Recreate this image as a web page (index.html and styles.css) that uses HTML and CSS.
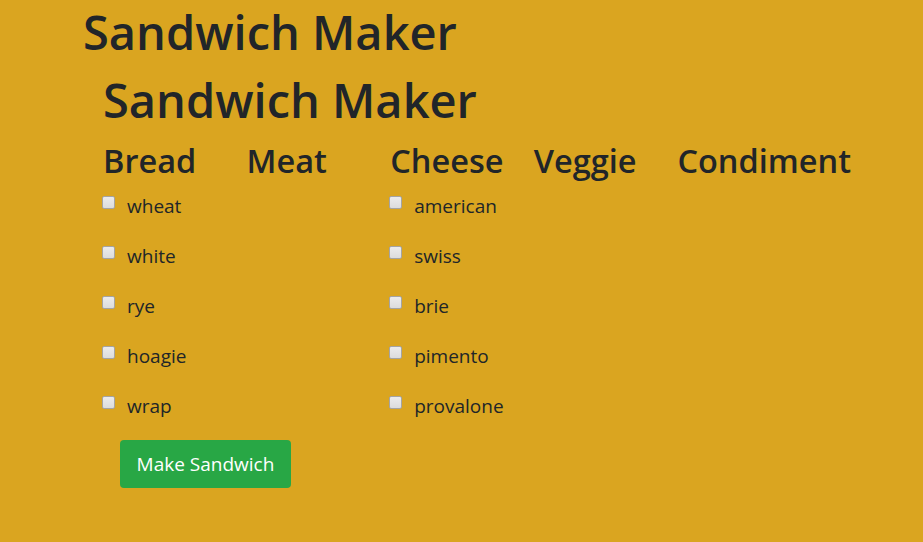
FILE: index.html
```html
<!DOCTYPE html>
<html lang="en">
<head>
<meta charset="utf-8">
<title>Sandwich Maker</title>
<link rel="stylesheet" href="styles.css">
</head>
<body>
<h1 class="page-title">Sandwich Maker</h1>
<main class="maker">
  <h1 class="maker-title">Sandwich Maker</h1>
  <div class="columns">
    <section class="col">
      <h2 class="col-title">Bread</h2>
      <label class="item"><input type="checkbox" class="check"><span>wheat</span></label>
      <label class="item"><input type="checkbox" class="check"><span>white</span></label>
      <label class="item"><input type="checkbox" class="check"><span>rye</span></label>
      <label class="item"><input type="checkbox" class="check"><span>hoagie</span></label>
      <label class="item"><input type="checkbox" class="check"><span>wrap</span></label>
    </section>
    <section class="col">
      <h2 class="col-title">Meat</h2>
    </section>
    <section class="col">
      <h2 class="col-title">Cheese</h2>
      <label class="item"><input type="checkbox" class="check"><span>american</span></label>
      <label class="item"><input type="checkbox" class="check"><span>swiss</span></label>
      <label class="item"><input type="checkbox" class="check"><span>brie</span></label>
      <label class="item"><input type="checkbox" class="check"><span>pimento</span></label>
      <label class="item"><input type="checkbox" class="check"><span>provalone</span></label>
    </section>
    <section class="col">
      <h2 class="col-title">Veggie</h2>
    </section>
    <section class="col">
      <h2 class="col-title">Condiment</h2>
    </section>
  </div>
  <button type="button" class="btn-make">Make Sandwich</button>
</main>
</body>
</html>
```
FILE: styles.css
```css
html, body {
  margin: 0;
  padding: 0;
}
body {
  background: #daa520;
  color: #212529;
  font-family: "Open Sans", "Noto Sans", sans-serif;
  height: 542px;
  overflow: hidden;
}
.page-title {
  margin: 0;
  padding-left: 83px;
  font-size: 47px;
  font-weight: 600;
  line-height: 64px;
}
.maker {
  padding-left: 103px;
}
.maker-title {
  margin: 0;
  font-size: 47px;
  font-weight: 600;
  line-height: 72px;
}
.columns {
  display: flex;
  margin-top: 4px;
}
.col {
  width: 143.6px;
  display: flex;
  flex-direction: column;
}
.col-title {
  margin: 0 0 12px;
  font-size: 32.5px;
  font-weight: 600;
  line-height: 42px;
}
.item {
  display: flex;
  align-items: flex-start;
  height: 50px;
  font-size: 19px;
  line-height: 24px;
}
.check {
  appearance: none;
  -webkit-appearance: none;
  width: 13px;
  height: 13px;
  margin: 2px 12px 0 -1px;
  border: 1px solid #a4a4a4;
  border-radius: 2px;
  background: linear-gradient(#ececec, #dcdcdc);
  box-sizing: border-box;
  flex: none;
}
.btn-make {
  margin: -4px 0 0 17px;
  width: 171px;
  height: 48px;
  border: none;
  border-radius: 4px;
  background: #28a745;
  color: #fff;
  font-family: inherit;
  font-size: 19px;
}
```
